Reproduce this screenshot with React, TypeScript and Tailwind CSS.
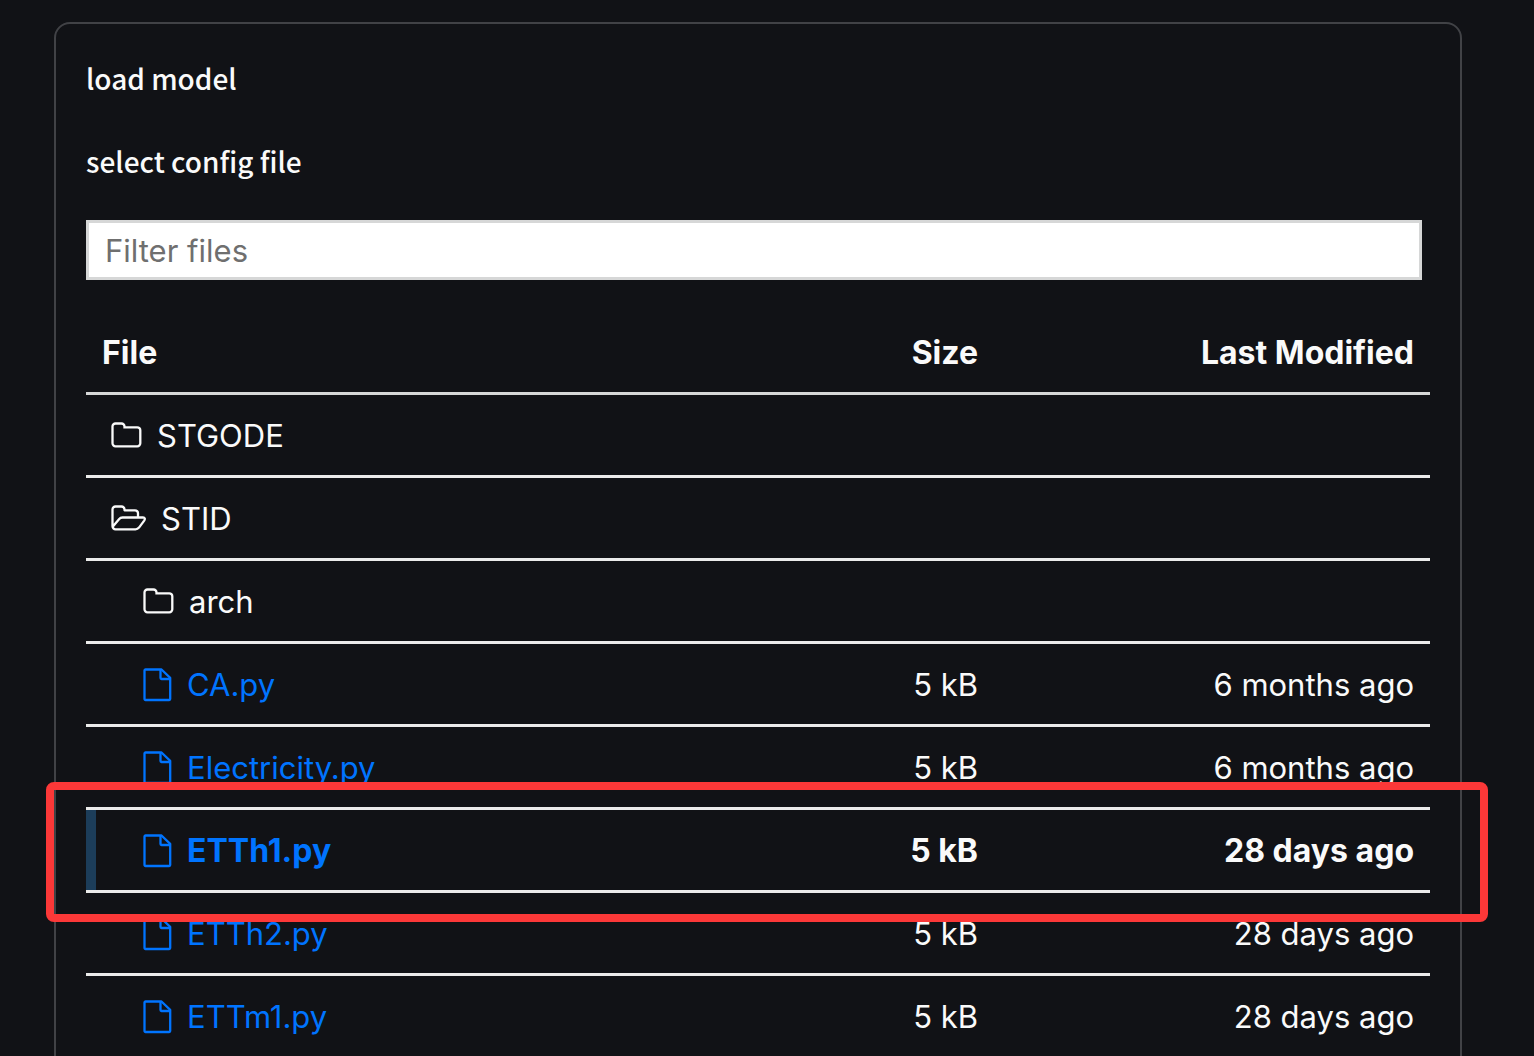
type Kind = "folder" | "open" | "file";

type Entry = {
  name: string;
  kind: Kind;
  nested?: boolean;
  size?: string;
  modified?: string;
  selected?: boolean;
};

const entries: Entry[] = [
  { name: "STGODE", kind: "folder" },
  { name: "STID", kind: "open" },
  { name: "arch", kind: "folder", nested: true },
  { name: "CA.py", kind: "file", nested: true, size: "5 kB", modified: "6 months ago" },
  { name: "Electricity.py", kind: "file", nested: true, size: "5 kB", modified: "6 months ago" },
  { name: "ETTh1.py", kind: "file", nested: true, size: "5 kB", modified: "28 days ago", selected: true },
  { name: "ETTh2.py", kind: "file", nested: true, size: "5 kB", modified: "28 days ago" },
  { name: "ETTm1.py", kind: "file", nested: true, size: "5 kB", modified: "28 days ago" },
];

function FolderIcon() {
  return (
    <svg className="h-7 w-[31px] shrink-0" viewBox="0 0 31 28" fill="none" stroke="currentColor" strokeWidth="2.3" aria-hidden="true">
      <path d="M1.500 4.500a3 3 0 0 1 3-3h6a3 3 0 0 1 3 3v.8h12.800a3 3 0 0 1 3 3v13a3 3 0 0 1-3 3H4.500a3 3 0 0 1-3-3z" />
    </svg>
  );
}

function OpenFolderIcon() {
  return (
    <svg className="h-7 w-[35px] shrink-0" viewBox="0 0 35 28" fill="none" stroke="currentColor" strokeWidth="2.3" strokeLinejoin="round" aria-hidden="true">
      <path d="M27 12.500V8.300a3 3 0 0 0-3-3H13.500v-.8a3 3 0 0 0-3-3h-6a3 3 0 0 0-3 3v16.800a3 3 0 0 0 3 3H24.500c1.400 0 2.600-.6 3.500-1.700l5.200-7c1.100-1.600.7-3.100-1.200-3.100H11.500c-1.400 0-2.600.6-3.500 1.700L1.900 21.500" />
    </svg>
  );
}

function FileIcon() {
  return (
    <svg className="h-[34px] w-[29px] shrink-0" viewBox="0 0 29 34" fill="none" stroke="currentColor" strokeWidth="2.3" strokeLinejoin="round" aria-hidden="true">
      <path d="M2.500 1.500H18.500L27.200 9.800V31a1 1 0 0 1-1 1H2.500a1 1 0 0 1-1-1V2.500a1 1 0 0 1 1-1z" />
      <path d="M17.500 1.500V10a1 1 0 0 0 1 1H27" />
    </svg>
  );
}

function EntryName({ entry }: { entry: Entry }) {
  if (entry.kind === "file") {
    return (
      <a href={`#${entry.name}`} className="flex items-center gap-[15px] text-[#0074ff]">
        <FileIcon />
        {entry.name}
      </a>
    );
  }
  return (
    <button type="button" className="flex items-center gap-[15px]">
      {entry.kind === "open" ? <OpenFolderIcon /> : <FolderIcon />}
      {entry.name}
    </button>
  );
}

function EntryRow({ entry }: { entry: Entry }) {
  const cell = "h-[83px] border-b-3 border-[#ebebeb] pt-0.5 pb-0 pr-4";
  return (
    <tr className={entry.selected ? "relative text-[32px] font-bold" : ""}>
      <td
        className={`${cell} ${entry.nested ? "pl-[57px]" : "pl-[25px]"} ${
          entry.selected ? "shadow-[inset_10px_0_0_#1c3d5a]" : ""
        }`}
      >
        <EntryName entry={entry} />
        {entry.selected && (
          <span className="pointer-events-none absolute -top-7 -right-[58px] -bottom-[29px] -left-10 z-10 rounded-lg border-8 border-[#fc3838]" />
        )}
      </td>
      <td className={`${cell} text-right`}>{entry.size}</td>
      <td className={`${cell} text-right`}>{entry.modified}</td>
    </tr>
  );
}

export default function App() {
  return (
    <main className="h-screen overflow-hidden bg-[#111216] pt-[22px] pr-[72px] pl-[54px] text-[#fafafa]">
      <section className="rounded-2xl border-2 border-[#414246] p-[30px]">
        <div className="flex flex-col gap-[35px] font-['Noto_Sans_CJK_SC',sans-serif] text-[28px] leading-[48px] font-medium">
          <p>load model</p>
          <label htmlFor="filter">select config file</label>
        </div>
        <div className="mt-[35px] font-['Inter',sans-serif] text-[31px] leading-10">
          <div className="pr-2">
            <input
              id="filter"
              type="text"
              placeholder="Filter files"
              className="block h-[60px] w-full border-3 border-[#d6d7d7] bg-white px-4 text-black placeholder:text-[#6f6f6f]"
            />
          </div>
          <table className="mt-8 w-full table-fixed border-separate border-spacing-0 text-left">
            <colgroup>
              <col />
              <col className="w-1/5" />
              <col className="w-[436px]" />
            </colgroup>
            <thead className="text-[32px]">
              <tr>
                <th className="h-[83px] border-b-3 border-[#d6d7d7] px-4 pt-0.5 pb-0 font-bold">File</th>
                <th className="h-[83px] border-b-3 border-[#d6d7d7] px-4 pt-0.5 pb-0 text-right font-bold">Size</th>
                <th className="h-[83px] border-b-3 border-[#d6d7d7] px-4 pt-0.5 pb-0 text-right font-bold">Last Modified</th>
              </tr>
            </thead>
            <tbody>
              {entries.map((entry) => (
                <EntryRow key={entry.name} entry={entry} />
              ))}
            </tbody>
          </table>
        </div>
      </section>
    </main>
  );
}
